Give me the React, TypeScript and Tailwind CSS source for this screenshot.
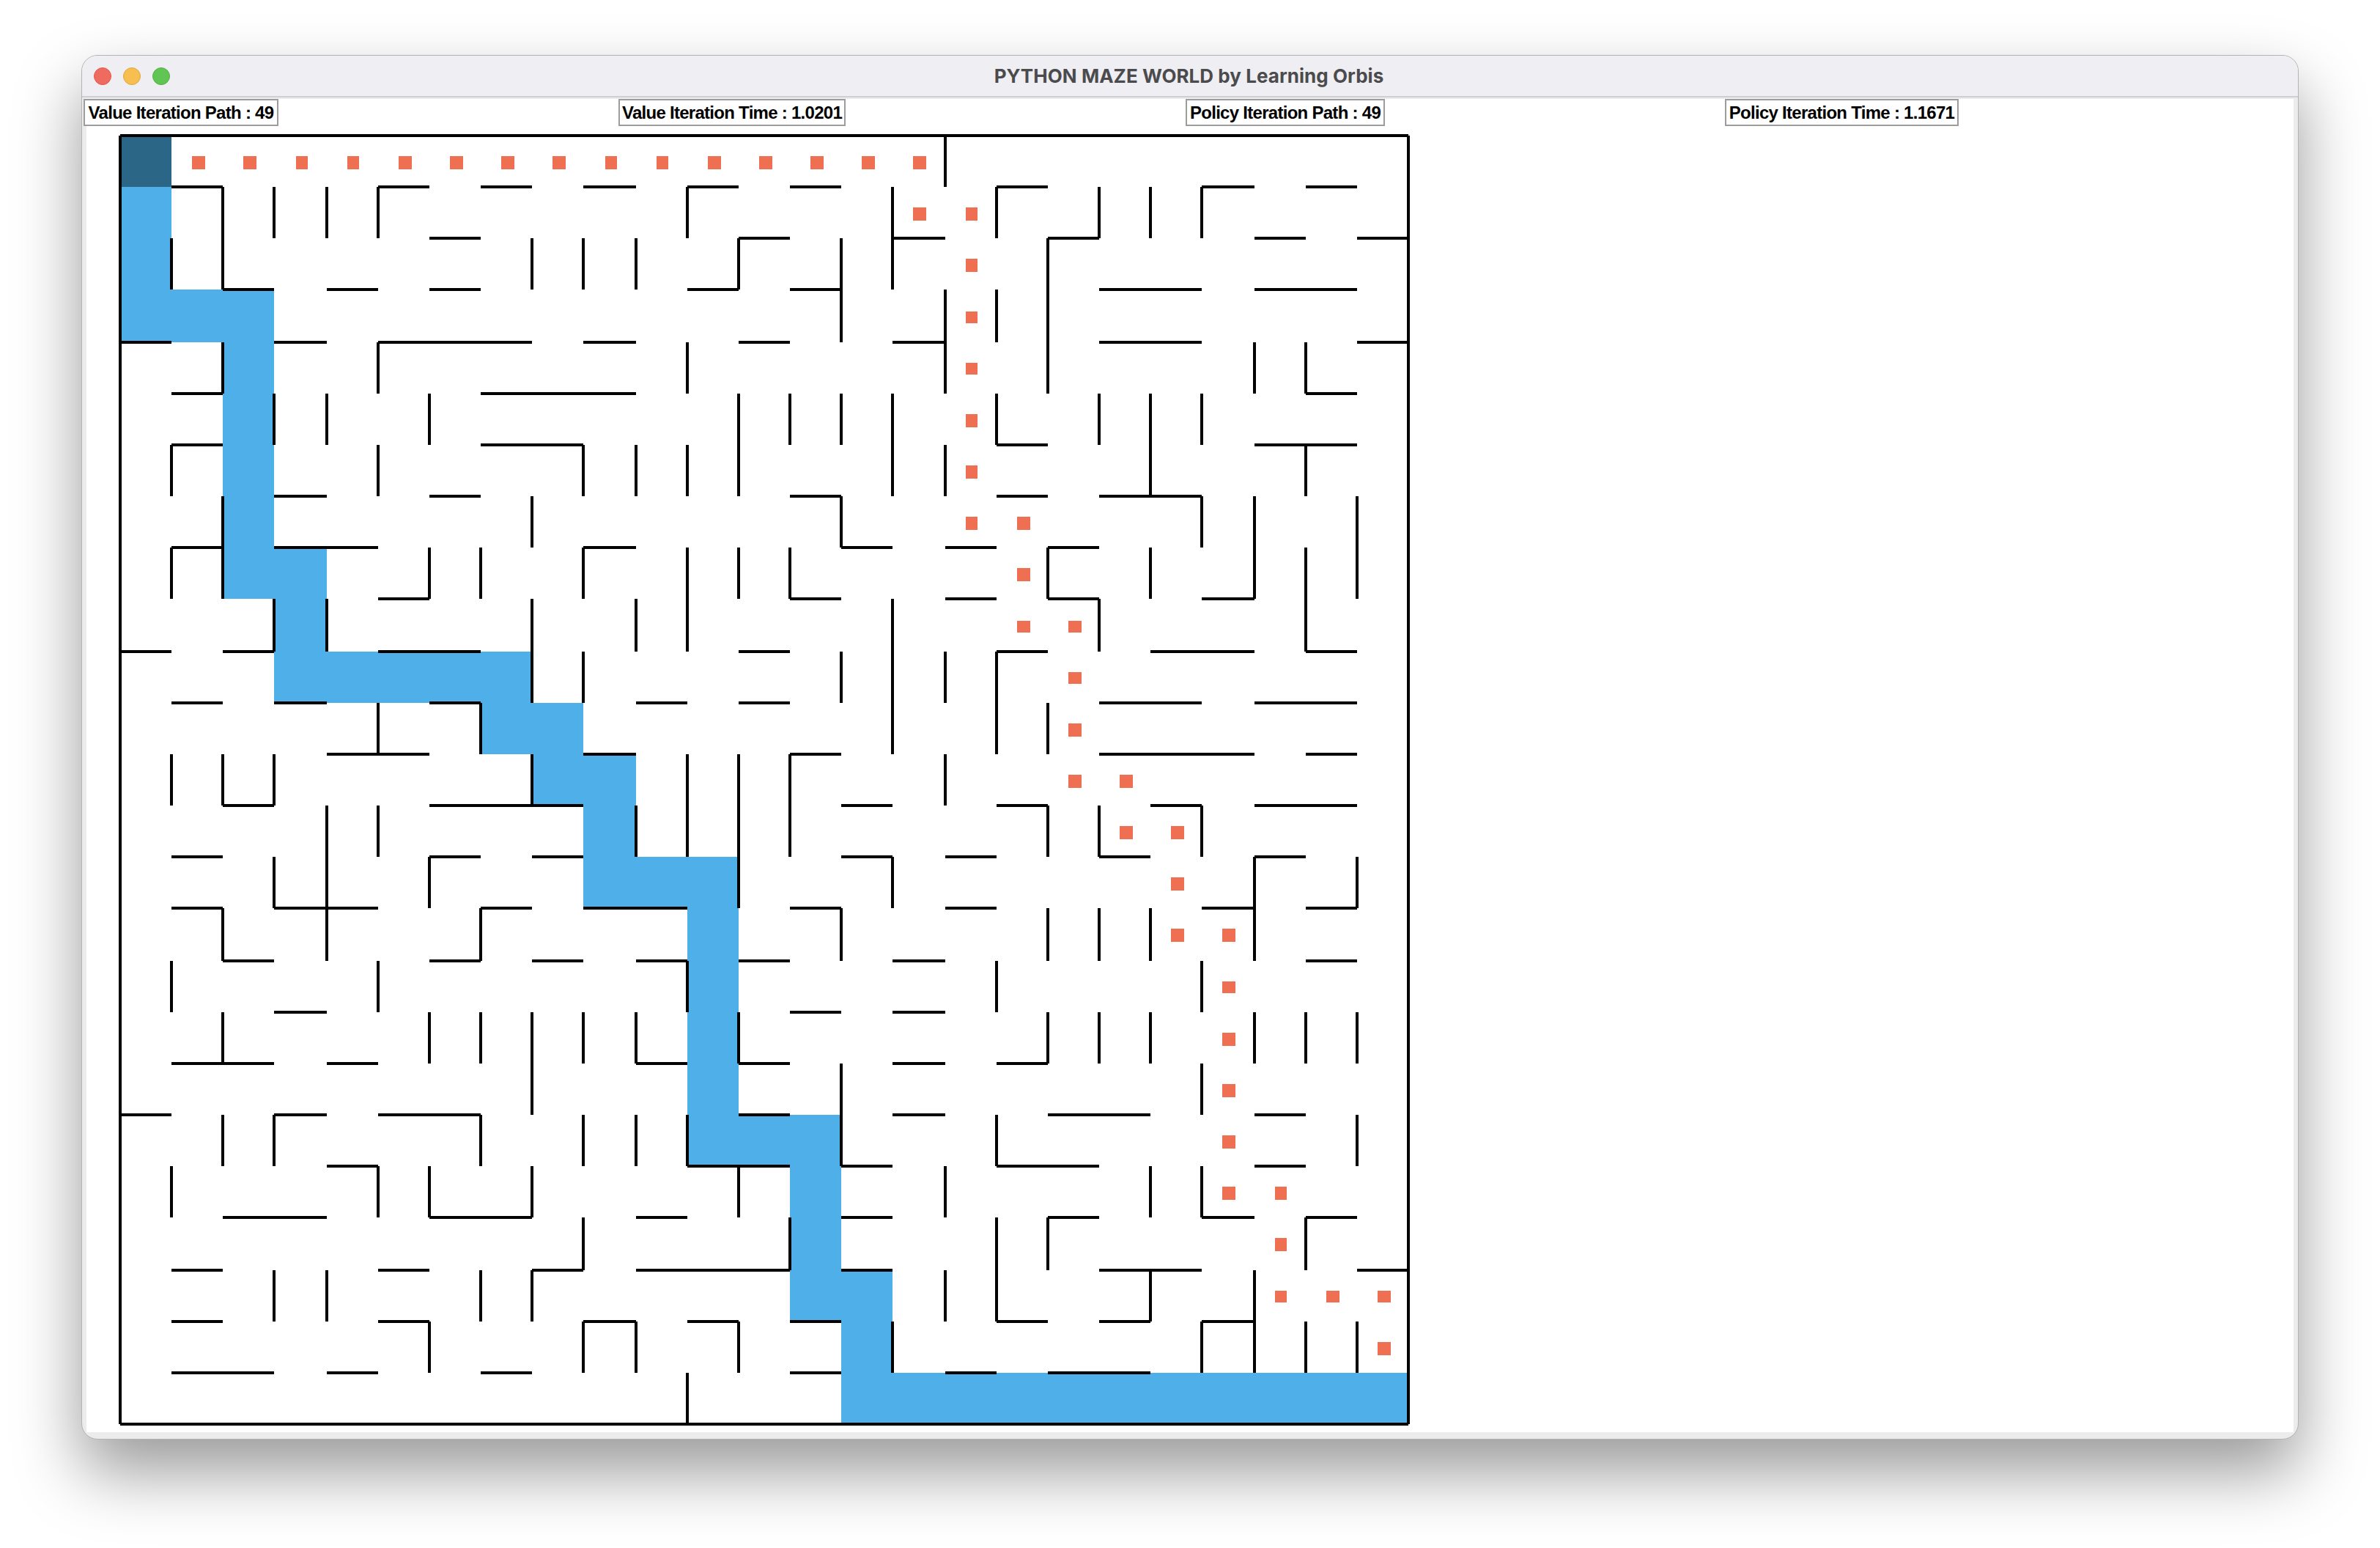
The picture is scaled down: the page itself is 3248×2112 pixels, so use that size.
const CELL = 35.16;
const g = (i: number) => 2 + 2 * Math.round(i * CELL);

const H: [number, string][] = [
  [0, "0-25"],
  [1, "1-2 5-6 7-8 9-10 11-12 13-14 17-18 21-22 23-24"],
  [2, "6-7 12-13 15-16 18-19 22-23 24-25"],
  [3, "2-3 4-5 6-7 11-12 13-14 19-21 22-24"],
  [4, "0-1 3-4 5-8 9-10 12-13 15-16 19-21 24-25"],
  [5, "1-2 7-10 23-24"],
  [6, "1-2 7-9 17-18 22-24"],
  [7, "3-4 6-7 13-14 17-18 19-21"],
  [8, "1-2 3-5 9-10 14-15 16-17 18-19"],
  [9, "5-6 13-14 16-17 18-19 21-22"],
  [10, "0-1 2-3 5-7 12-13 17-18 20-22 23-24"],
  [11, "1-2 3-4 6-7 10-11 12-13 19-21 22-24"],
  [12, "4-6 9-10 13-14 19-22 23-24"],
  [13, "2-3 6-9 14-15 17-18 20-21 22-24"],
  [14, "1-2 6-7 8-9 14-15 16-17 19-20 22-23"],
  [15, "1-2 3-5 7-8 9-11 13-14 16-17 21-22 23-24"],
  [16, "2-3 6-7 8-9 10-11 12-13 15-16 23-24"],
  [17, "3-4 13-14 15-16"],
  [18, "1-3 4-5 10-11 12-13 15-16 17-18"],
  [19, "0-1 3-4 5-7 12-13 15-16 18-20 22-23"],
  [20, "4-5 11-13 14-15 17-19 22-23"],
  [21, "2-4 6-8 10-11 14-15 18-19 21-22 23-24"],
  [22, "1-2 5-6 8-9 10-13 14-15 19-21 24-25"],
  [23, "1-2 5-6 9-10 11-12 13-14 17-18 19-20 21-22"],
  [24, "1-3 4-5 7-8 13-14 16-17 18-20"],
  [25, "0-25"],
];

const V: [number, string][] = [
  [0, "0-25"],
  [1, "2-3 6-7 8-9 12-13 16-17 20-21"],
  [2, "1-3 4-5 7-9 12-13 15-16 17-18 19-20"],
  [3, "1-2 5-6 9-10 12-13 14-15 19-20 22-23"],
  [4, "1-2 5-6 9-10 13-16 22-23"],
  [5, "1-2 4-5 6-7 11-12 13-14 16-17 20-21"],
  [6, "5-6 8-9 14-15 17-18 20-21 23-24"],
  [7, "8-9 11-12 15-16 17-18 19-20 22-23"],
  [8, "2-3 7-8 9-11 12-13 17-19 20-21 22-23"],
  [9, "2-3 6-7 8-9 10-11 17-18 19-20 21-22 23-24"],
  [10, "2-3 6-7 9-10 13-14 17-18 19-20 23-24"],
  [11, "1-2 4-5 6-7 8-10 12-14 16-17 19-20 24-25"],
  [12, "2-3 5-7 8-9 12-15 17-18 20-21 23-24"],
  [13, "5-6 8-9 12-14 21-22"],
  [14, "2-4 5-6 7-8 10-11 15-16 18-20"],
  [15, "1-3 5-7 9-12 14-15 23-24"],
  [16, "0-1 3-5 6-7 10-11 12-13 20-21 22-23"],
  [17, "1-2 3-4 5-6 10-12 16-17 19-20 21-23"],
  [18, "2-5 8-9 11-12 13-14 15-16 17-18 21-22"],
  [19, "1-2 5-6 9-10 13-14 15-16 17-18"],
  [20, "1-2 5-7 8-9 15-16 17-18 20-21 22-23"],
  [21, "1-2 5-6 7-8 13-14 16-17 18-19 20-21 23-24"],
  [22, "4-5 7-9 14-16 17-18 22-24"],
  [23, "4-5 6-7 8-10 17-18 21-22 23-24"],
  [24, "7-9 14-15 17-18 19-20 23-24"],
  [25, "0-25"],
];

const spans = (s: string) => s.split(" ").map((p) => p.split("-").map(Number));

const bluePath: [number, number][] = [
  [0, 1], [0, 2], [0, 3], [1, 3], [2, 3], [2, 4], [2, 5], [2, 6], [2, 7], [2, 8],
  [3, 8], [3, 9], [3, 10], [4, 10], [5, 10], [6, 10], [7, 10], [7, 11], [8, 11],
  [8, 12], [9, 12], [9, 13], [9, 14], [10, 14], [11, 14], [11, 15], [11, 16],
  [11, 17], [11, 18], [11, 19], [12, 19], [13, 19], [13, 20], [13, 21], [13, 22],
  [14, 22], [14, 23], [14, 24], [15, 24], [16, 24], [17, 24], [18, 24], [19, 24],
  [20, 24], [21, 24], [22, 24], [23, 24], [24, 24],
];

const dots: [number, number][] = [
  [1, 0], [2, 0], [3, 0], [4, 0], [5, 0], [6, 0], [7, 0], [8, 0], [9, 0], [10, 0],
  [11, 0], [12, 0], [13, 0], [14, 0], [15, 0], [15, 1], [16, 1], [16, 2], [16, 3],
  [16, 4], [16, 5], [16, 6], [16, 7], [17, 7], [17, 8], [17, 9], [18, 9], [18, 10],
  [18, 11], [18, 12], [19, 12], [19, 13], [20, 13], [20, 14], [20, 15], [21, 15],
  [21, 16], [21, 17], [21, 18], [21, 19], [21, 20], [22, 20], [22, 21], [22, 22],
  [23, 22], [24, 22], [24, 23],
];

const d0 = (i: number) => 2 + 2 * Math.round((i + 0.4) * CELL);
const d1 = (i: number) => 2 + 2 * Math.round((i + 0.65) * CELL);

function Maze() {
  return (
    <svg width={1764} height={1764} viewBox="0 0 1764 1764" shapeRendering="crispEdges" className="mt-[11px] ml-[44px] block">
      <rect x={g(0)} y={g(0)} width={g(1) - g(0)} height={g(1) - g(0)} fill="#2b6687" />
      {bluePath.map(([c, r]) => (
        <rect key={`b${c}-${r}`} x={g(c)} y={g(r)} width={g(c + 1) - g(c)} height={g(r + 1) - g(r)} fill="#4fb0e9" />
      ))}
      {dots.map(([c, r]) => (
        <rect key={`d${c}-${r}`} x={d0(c)} y={d0(r)} width={d1(c) - d0(c)} height={d1(r) - d0(r)} fill="#ee6f51" />
      ))}
      {H.flatMap(([r, s]) =>
        spans(s).map(([a, b]) => (
          <line key={`h${r}-${a}`} x1={g(a)} x2={g(b)} y1={g(r)} y2={g(r)} stroke="#000" strokeWidth={4} />
        )),
      )}
      {V.flatMap(([c, s]) =>
        spans(s).map(([a, b]) => (
          <line key={`v${c}-${a}`} x1={g(c)} x2={g(c)} y1={g(a)} y2={g(b)} stroke="#000" strokeWidth={4} />
        )),
      )}
    </svg>
  );
}

function Stat({ text, w }: { text: string; w: string }) {
  return (
    <div
      className={`${w} h-[37px] shrink-0 border-2 border-[#9c9c9c] bg-white text-center font-['Liberation_Sans',sans-serif] text-[24px] leading-[33px] font-bold tracking-[-0.72px] whitespace-nowrap text-black`}
    >
      {text}
    </div>
  );
}

export default function App() {
  return (
    <div className="h-[2112px] w-[3248px] overflow-hidden bg-white pt-[75px] pl-[111px]">
      <div className="flex h-[1889px] w-[3026px] flex-col overflow-hidden rounded-[22px] border border-[#b3b3b3] bg-[#ececec] shadow-[0_44px_90px_rgba(0,0,0,0.4)]">
        <div className="grid h-[57px] shrink-0 grid-cols-[1fr_auto_1fr] items-center border-b-2 border-[#cfcfd1] bg-[#efeef3] pr-[19px] pl-[16px]">
          <div className="flex gap-[16px]">
            <div className="h-[24px] w-[24px] rounded-full border border-[#e1574c] bg-[#ef6b5f]" />
            <div className="h-[24px] w-[24px] rounded-full border border-[#dfa63f] bg-[#f6bf4f]" />
            <div className="h-[24px] w-[24px] rounded-full border border-[#52b044] bg-[#61c554]" />
          </div>
          <div className="font-['Inter',sans-serif] text-[26px] font-bold tracking-[0.05px] text-[#4b4b4d]">PYTHON MAZE WORLD by Learning Orbis</div>
          <div />
        </div>
        <div className="min-h-0 flex-1 px-[6px] pt-[6px] pb-[5px]">
          <div className="h-full bg-white">
            <div className="-mt-[4px] -ml-[4px] flex gap-[464px]">
              <Stat text="Value Iteration Path : 49" w="w-[266px]" />
              <Stat text="Value Iteration Time : 1.0201" w="w-[310px]" />
              <Stat text="Policy Iteration Path : 49" w="w-[272px]" />
              <Stat text="Policy Iteration Time : 1.1671" w="w-[319px]" />
            </div>
            <Maze />
          </div>
        </div>
      </div>
    </div>
  );
}
